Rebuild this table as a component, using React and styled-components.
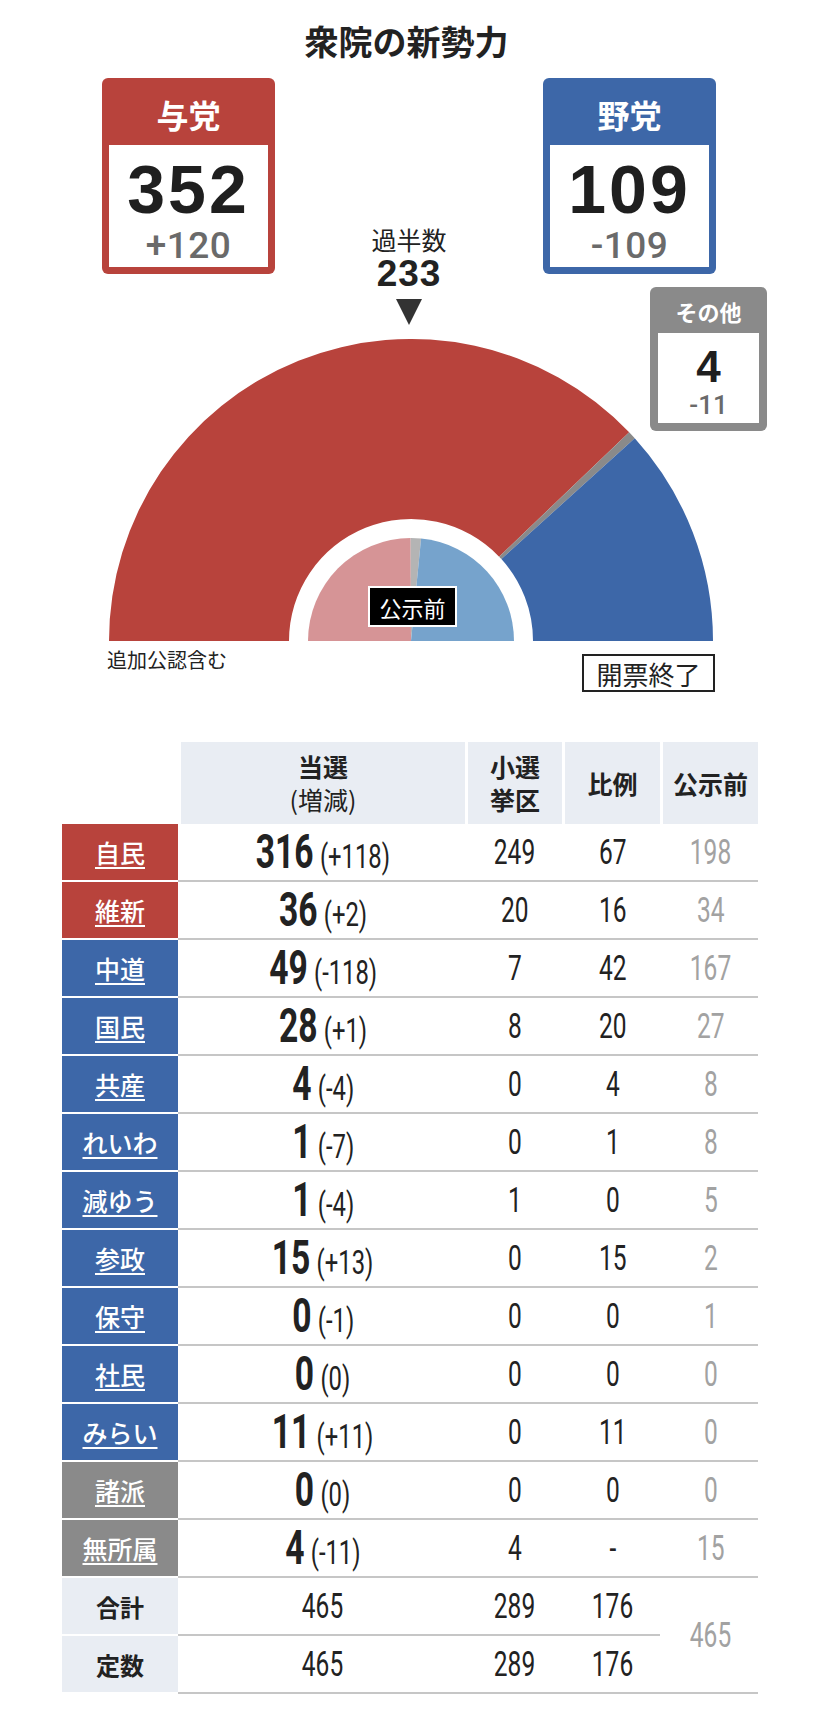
import React from 'react';
import styled, { createGlobalStyle } from 'styled-components';

const RED = '#b8433c';
const BLUE = '#3d67a8';
const GRAY = '#8a8a8a';
const HEAD_BG = '#e9edf3';
const JP = '"Noto Sans CJK JP", "Noto Sans", sans-serif';
const NUM = '"Liberation Sans", Arial, sans-serif';
const COND = 'Roboto, "Liberation Sans", sans-serif';

const GlobalStyle = createGlobalStyle`
  body {
    margin: 0;
    background: #fff;
    color: #222;
    font-family: ${JP};
  }
`;

const Page = styled.div`
  position: relative;
  width: 813px;
  padding-bottom: 20px;
`;

const Title = styled.h1`
  margin: 0;
  padding-top: 21px;
  height: 40px;
  line-height: 40px;
  text-align: center;
  font-size: 34px;
  font-weight: 700;
  color: #222;
`;

const TopRow = styled.div`
  display: flex;
  align-items: flex-start;
  margin-top: 17px;
  padding-left: 102px;
`;

const BlocBox = styled.div`
  width: ${p => p.$w}px;
  background: ${p => p.$bg};
  border-radius: 6px;
  padding: 0 ${p => p.$pad}px ${p => p.$pad}px;
  box-sizing: border-box;
`;

const BlocHead = styled.div`
  height: ${p => p.$h}px;
  display: flex;
  align-items: center;
  justify-content: center;
  padding-top: ${p => p.$top}px;
  box-sizing: border-box;
  color: #fff;
  font-size: ${p => p.$size}px;
  font-weight: 700;
`;

const BlocBody = styled.div`
  background: #fff;
  height: ${p => p.$h}px;
  display: flex;
  flex-direction: column;
  align-items: center;
  padding-top: ${p => p.$top}px;
  box-sizing: border-box;
  font-family: ${NUM};
`;

const Seats = styled.div`
  font-size: ${p => p.$size}px;
  line-height: 1;
  font-weight: 700;
  color: #1f1f1f;
  letter-spacing: ${p => p.$ls || 0}px;
`;

const Delta = styled.div`
  margin-top: ${p => p.$mt}px;
  font-family: ${COND};
  font-size: ${p => p.$size}px;
  line-height: 1;
  font-weight: 500;
  letter-spacing: ${p => p.$ls || 0}px;
  color: #6a6a6a;
`;

const Majority = styled.div`
  width: 268px;
  display: flex;
  flex-direction: column;
  align-items: center;
  padding-top: 147px;
`;

const MajLabel = styled.div`
  font-size: 25px;
  line-height: 28px;
  color: #222;
`;

const MajNum = styled.div`
  margin-top: 2px;
  font-family: ${NUM};
  font-size: 37px;
  line-height: 1;
  font-weight: 700;
  letter-spacing: 1px;
  color: #222;
`;

const Arrow = styled.div`
  margin-top: 7px;
  width: 0;
  height: 0;
  border-left: 13px solid transparent;
  border-right: 13px solid transparent;
  border-top: 26px solid #333;
`;

const OtherBox = styled(BlocBox)`
  position: absolute;
  left: 650px;
  top: 287px;
`;

const ChartWrap = styled.div`
  position: relative;
  margin-top: 14px;
  height: 303px;
`;

const PreTag = styled.div`
  position: absolute;
  left: 368px;
  top: 247px;
  width: 89px;
  height: 41px;
  box-sizing: border-box;
  background: #000;
  border: 2px solid #fff;
  color: #fff;
  font-size: 22px;
  display: flex;
  align-items: center;
  justify-content: center;
`;

const ChartFoot = styled.div`
  display: flex;
  justify-content: space-between;
  align-items: flex-start;
  margin-top: 12px;
  padding: 0 98px 0 107px;
`;

const Note = styled.div`
  margin-top: -5px;
  font-size: 20px;
  line-height: 22px;
  color: #222;
`;

const Status = styled.div`
  width: 133px;
  height: 38px;
  box-sizing: border-box;
  border: 2px solid #222;
  font-size: 26px;
  display: flex;
  align-items: center;
  justify-content: center;
  color: #222;
`;

const Table = styled.div`
  margin: 50px 0 0 62px;
  width: 696px;
`;

const HeadRow = styled.div`
  display: flex;
  height: 82px;
`;

const Spacer = styled.div`
  width: 116px;
  flex: none;
`;

const HeadGrid = styled.div`
  display: grid;
  grid-template-columns: 284px 94px 95px 95px;
  column-gap: 3px;
  padding-left: 3px;
`;

const HeadCell = styled.div`
  background: ${HEAD_BG};
  display: flex;
  flex-direction: column;
  align-items: center;
  justify-content: center;
  font-size: 25px;
  font-weight: 700;
  color: #222;
`;

const HeadLine = styled.div`
  line-height: 33px;
  font-weight: ${p => (p.$light ? 400 : 700)};
`;

const Row = styled.div`
  display: flex;
  height: 58px;
`;

const Label = styled.div`
  width: 116px;
  height: 56px;
  flex: none;
  background: ${p => p.$bg};
  display: flex;
  align-items: center;
  justify-content: center;
  font-size: ${p => (p.$plain ? 24 : 25)}px;
  font-weight: ${p => (p.$plain ? 700 : 500)};
  color: ${p => (p.$plain ? '#222' : '#fff')};
  text-decoration: ${p => (p.$plain ? 'none' : 'underline')};
  text-decoration-thickness: 2px;
  text-underline-offset: 4px;
`;

const DataGrid = styled.div`
  display: grid;
  grid-template-columns: 287px 97px 98px 98px;
  height: 56px;
  border-bottom: 2px solid #c6c6c6;
`;

const Cell = styled.div`
  padding-left: 3px;
  display: flex;
  align-items: center;
  justify-content: center;
  color: ${p => (p.$muted ? '#a2a2a2' : '#222')};
`;

const Narrow = styled.span`
  display: inline-block;
  white-space: nowrap;
  font-family: ${COND};
  font-size: ${p => p.$size || 35}px;
  line-height: 1;
  transform: scaleX(0.7);
`;

const Big = styled.span`
  font-size: 48px;
  font-weight: 700;
  margin-right: 9px;
`;

const Change = styled.span`
  font-size: 34px;
`;

const SumBlock = styled.div`
  display: flex;
`;

const SumLabels = styled.div`
  display: flex;
  flex-direction: column;
  gap: 2px;
`;

const SumRows = styled.div`
  display: flex;
  flex-direction: column;
`;

const SumGrid = styled(DataGrid)`
  grid-template-columns: 287px 97px 98px;
`;

const Merged = styled(Cell)`
  width: 95px;
  height: 114px;
  border-bottom: 2px solid #c6c6c6;
`;

const CX = 411, CY = 302, R = 302, RI = 122, RP = 103;

const pt = (r, a) => {
  const t = (a * Math.PI) / 180;
  return `${(CX + r * Math.cos(t)).toFixed(2)} ${(CY - r * Math.sin(t)).toFixed(2)}`;
};

const ring = (a1, a2) =>
  `M${pt(R, a1)} A${R} ${R} 0 0 1 ${pt(R, a2)} L${pt(RI, a2)} A${RI} ${RI} 0 0 0 ${pt(RI, a1)} Z`;

const pie = (a1, a2) => `M${CX} ${CY} L${pt(RP, a1)} A${RP} ${RP} 0 0 1 ${pt(RP, a2)} Z`;

// split 180deg between blocs, left to right
const slices = (values, colors) => {
  const total = values.reduce((s, v) => s + v, 0);
  let a = 180;
  return values.map((v, i) => {
    const a1 = a;
    a -= (v / total) * 180;
    return { a1, a2: a, color: colors[i] };
  });
};

const outer = slices([352, 4, 109], [RED, GRAY, BLUE]);
const inner = slices([232, 15, 218], ['#d69496', '#b4b4b4', '#76a3cc']);

function SeatChart() {
  return (
    <svg width="813" height="303" viewBox="0 0 813 303">
      {outer.map((s, i) => (
        <path key={'o' + i} d={ring(s.a1, s.a2)} fill={s.color} />
      ))}
      {inner.map((s, i) => (
        <path key={'i' + i} d={pie(s.a1, s.a2)} fill={s.color} />
      ))}
    </svg>
  );
}

const parties = [
  ['自民', RED, '316', '(+118)', '249', '67', '198'],
  ['維新', RED, '36', '(+2)', '20', '16', '34'],
  ['中道', BLUE, '49', '(-118)', '7', '42', '167'],
  ['国民', BLUE, '28', '(+1)', '8', '20', '27'],
  ['共産', BLUE, '4', '(-4)', '0', '4', '8'],
  ['れいわ', BLUE, '1', '(-7)', '0', '1', '8'],
  ['減ゆう', BLUE, '1', '(-4)', '1', '0', '5'],
  ['参政', BLUE, '15', '(+13)', '0', '15', '2'],
  ['保守', BLUE, '0', '(-1)', '0', '0', '1'],
  ['社民', BLUE, '0', '(0)', '0', '0', '0'],
  ['みらい', BLUE, '11', '(+11)', '0', '11', '0'],
  ['諸派', GRAY, '0', '(0)', '0', '0', '0'],
  ['無所属', GRAY, '4', '(-11)', '4', '-', '15'],
];

function Bloc({ name, color, seats, delta }) {
  return (
    <BlocBox $w={173} $bg={color} $pad={7}>
      <BlocHead $h={67} $top={5} $size={32}>{name}</BlocHead>
      <BlocBody $h={122} $top={10}>
        <Seats $size={68} $ls={3}>{seats}</Seats>
        <Delta $mt={4} $size={37} $ls={0.5}>{delta}</Delta>
      </BlocBody>
    </BlocBox>
  );
}

export default function App() {
  return (
    <Page>
      <GlobalStyle />
      <Title>衆院の新勢力</Title>

      <TopRow>
        <Bloc name="与党" color={RED} seats="352" delta="+120" />
        <Majority>
          <MajLabel>過半数</MajLabel>
          <MajNum>233</MajNum>
          <Arrow />
        </Majority>
        <Bloc name="野党" color={BLUE} seats="109" delta="-109" />
      </TopRow>

      <OtherBox $w={117} $bg={GRAY} $pad={8}>
        <BlocHead $h={46} $top={2} $size={22}>その他</BlocHead>
        <BlocBody $h={90} $top={12}>
          <Seats $size={44}>4</Seats>
          <Delta $mt={3} $size={26}>-11</Delta>
        </BlocBody>
      </OtherBox>

      <ChartWrap>
        <SeatChart />
        <PreTag>公示前</PreTag>
      </ChartWrap>

      <ChartFoot>
        <Note>追加公認含む</Note>
        <Status>開票終了</Status>
      </ChartFoot>

      <Table>
        <HeadRow>
          <Spacer />
          <HeadGrid>
            <HeadCell>
              <HeadLine>当選</HeadLine>
              <HeadLine $light>(増減)</HeadLine>
            </HeadCell>
            <HeadCell>
              <HeadLine>小選</HeadLine>
              <HeadLine>挙区</HeadLine>
            </HeadCell>
            <HeadCell>比例</HeadCell>
            <HeadCell>公示前</HeadCell>
          </HeadGrid>
        </HeadRow>

        {parties.map(([name, color, won, diff, smd, pr, pre]) => (
          <Row key={name}>
            <Label $bg={color}>{name}</Label>
            <DataGrid>
              <Cell>
                <Narrow>
                  <Big>{won}</Big>
                  <Change>{diff}</Change>
                </Narrow>
              </Cell>
              <Cell><Narrow>{smd}</Narrow></Cell>
              <Cell><Narrow>{pr}</Narrow></Cell>
              <Cell $muted><Narrow>{pre}</Narrow></Cell>
            </DataGrid>
          </Row>
        ))}

        <SumBlock>
          <SumLabels>
            <Label $bg={HEAD_BG} $plain>合計</Label>
            <Label $bg={HEAD_BG} $plain>定数</Label>
          </SumLabels>
          <SumRows>
            <SumGrid>
              <Cell><Narrow>465</Narrow></Cell>
              <Cell><Narrow>289</Narrow></Cell>
              <Cell><Narrow>176</Narrow></Cell>
            </SumGrid>
            <SumGrid>
              <Cell><Narrow>465</Narrow></Cell>
              <Cell><Narrow>289</Narrow></Cell>
              <Cell><Narrow>176</Narrow></Cell>
            </SumGrid>
          </SumRows>
          <Merged $muted><Narrow>465</Narrow></Merged>
        </SumBlock>
      </Table>
    </Page>
  );
}
